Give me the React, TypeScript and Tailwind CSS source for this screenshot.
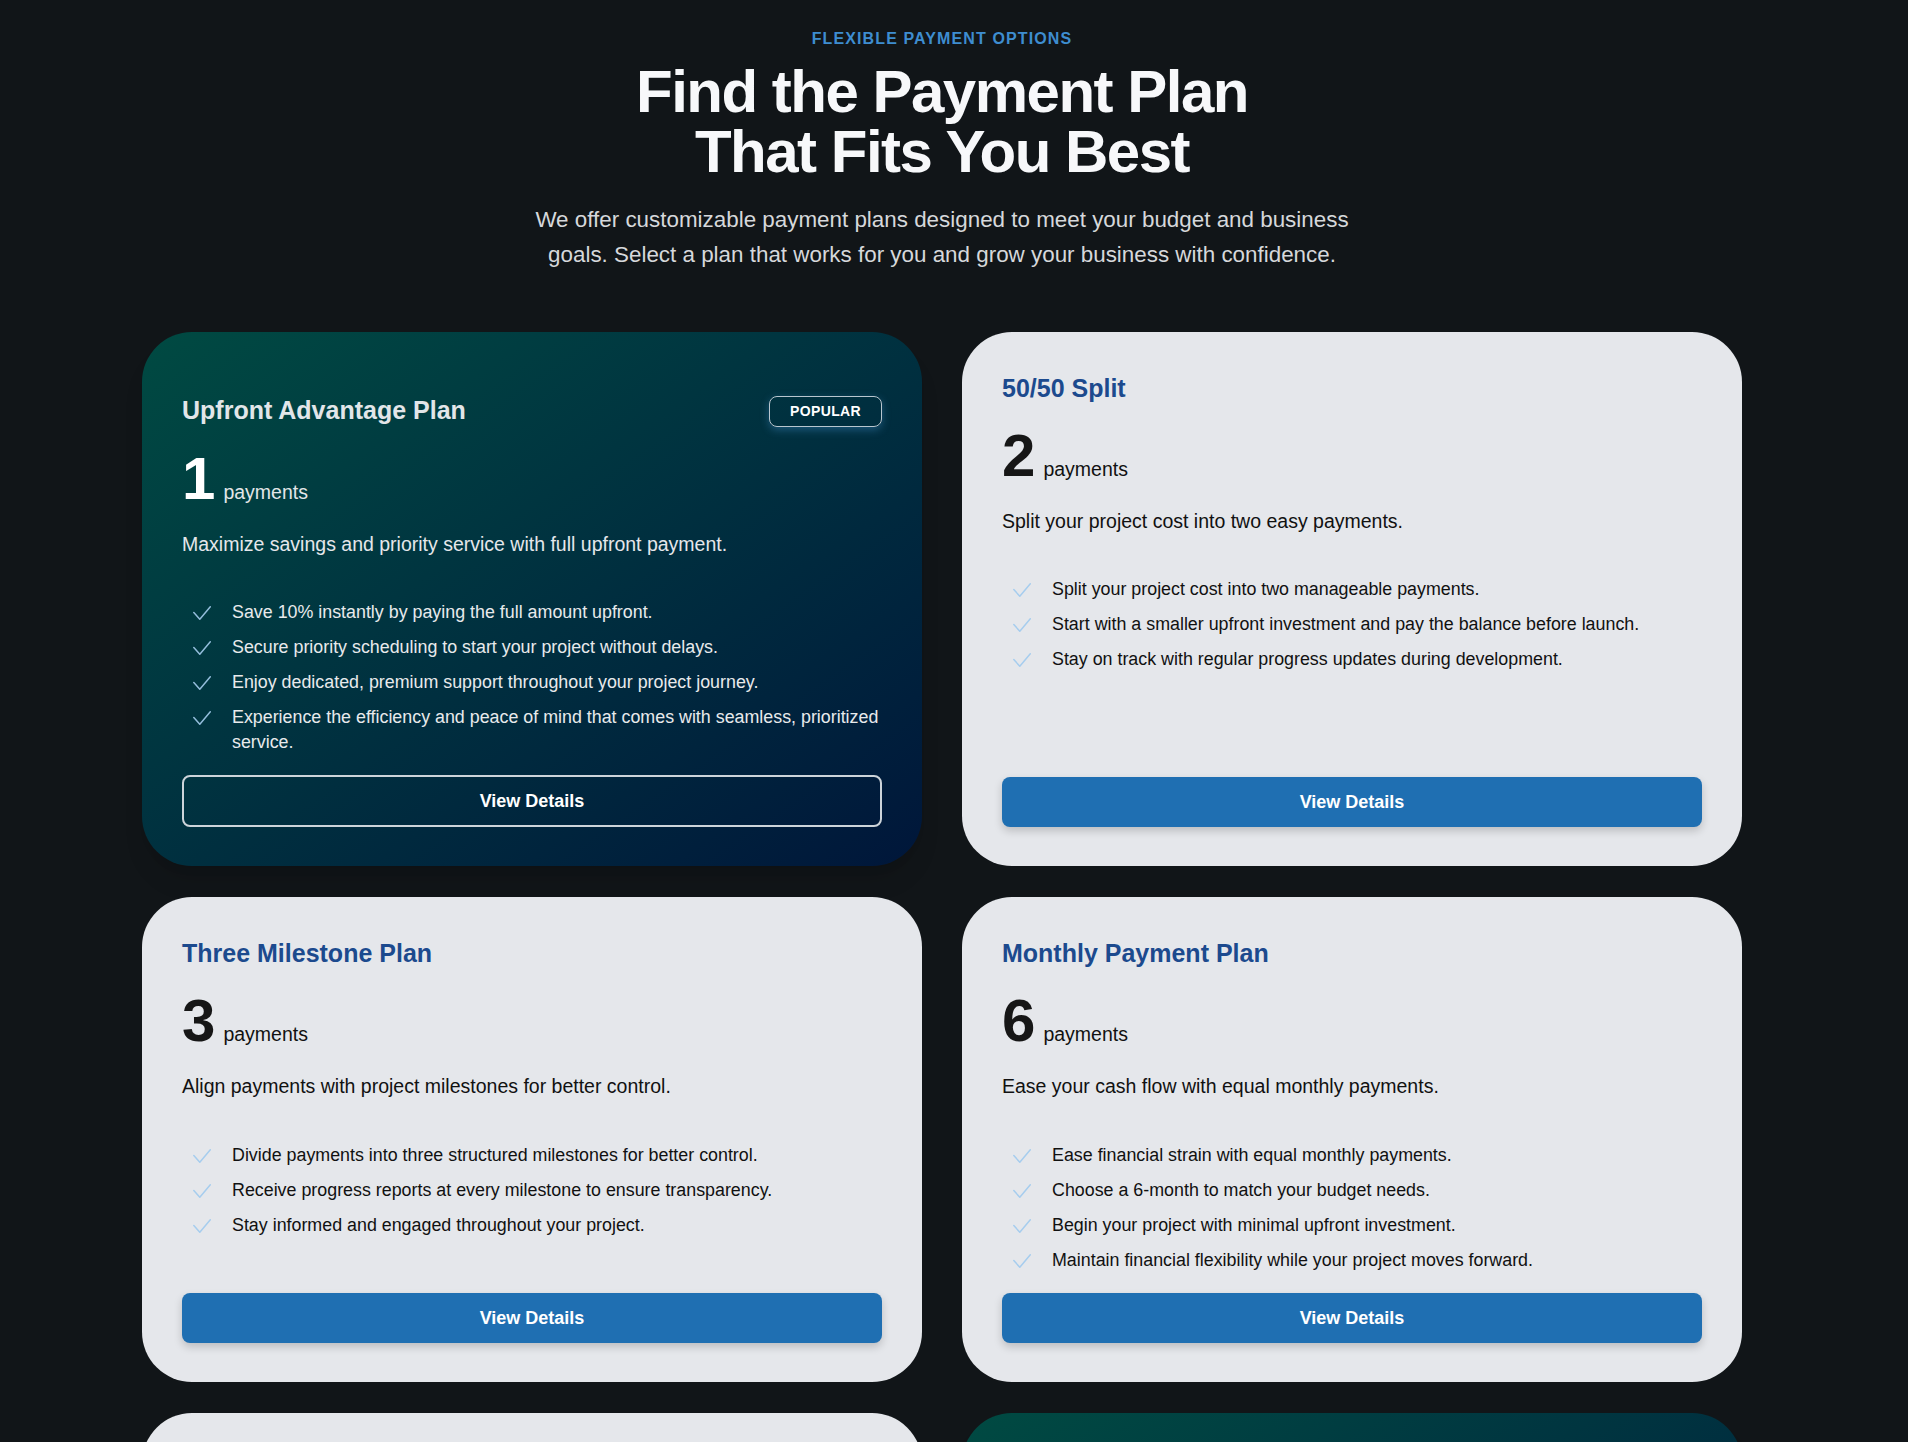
import * as React from "react";

type Plan = {
  title: string;
  count: number;
  blurb: string;
  features: string[];
  dark?: boolean;
  popular?: boolean;
};

const plans: Plan[] = [
  {
    title: "Upfront Advantage Plan",
    count: 1,
    blurb: "Maximize savings and priority service with full upfront payment.",
    features: [
      "Save 10% instantly by paying the full amount upfront.",
      "Secure priority scheduling to start your project without delays.",
      "Enjoy dedicated, premium support throughout your project journey.",
      "Experience the efficiency and peace of mind that comes with seamless, prioritized service.",
    ],
    dark: true,
    popular: true,
  },
  {
    title: "50/50 Split",
    count: 2,
    blurb: "Split your project cost into two easy payments.",
    features: [
      "Split your project cost into two manageable payments.",
      "Start with a smaller upfront investment and pay the balance before launch.",
      "Stay on track with regular progress updates during development.",
    ],
  },
  {
    title: "Three Milestone Plan",
    count: 3,
    blurb: "Align payments with project milestones for better control.",
    features: [
      "Divide payments into three structured milestones for better control.",
      "Receive progress reports at every milestone to ensure transparency.",
      "Stay informed and engaged throughout your project.",
    ],
  },
  {
    title: "Monthly Payment Plan",
    count: 6,
    blurb: "Ease your cash flow with equal monthly payments.",
    features: [
      "Ease financial strain with equal monthly payments.",
      "Choose a 6-month to match your budget needs.",
      "Begin your project with minimal upfront investment.",
      "Maintain financial flexibility while your project moves forward.",
    ],
  },
  {
    title: "Quarterly Payment Plan",
    count: 4,
    blurb: "Spread your investment across four quarterly payments.",
    features: [
      "Pay once every quarter for predictable budgeting.",
      "Keep more working capital on hand throughout the year.",
      "Receive quarterly reviews of your project progress.",
    ],
  },
  {
    title: "Custom Enterprise Plan",
    count: 12,
    blurb: "A tailored schedule built around your organization.",
    features: [
      "Work with our team to design a schedule that suits you.",
      "Align payments with your internal budget cycles.",
      "Get a dedicated account manager for the full engagement.",
    ],
    dark: true,
  },
];

const Tick = ({ dark }: { dark?: boolean }) => (
  <svg
    width="18"
    height="14"
    viewBox="0 0 18 14"
    fill="none"
    className={`shrink-0 mt-[6px] ml-[11px] mr-[21px] ${dark ? "text-[#93bddb]" : "text-[#a6cdee]"}`}
  >
    <path
      d="M0.8 6.6 L6.8 13.2 L17.3 0.8"
      stroke="currentColor"
      strokeWidth="1.5"
      strokeLinecap="round"
      strokeLinejoin="round"
    />
  </svg>
);

const PlanCard = ({ plan }: { plan: Plan }) => {
  const dark = plan.dark;
  return (
    <div
      className={`flex flex-col rounded-[50px] px-10 ${
        dark
          ? "pt-[60px] pb-[39px] bg-linear-to-br from-[#004a42] to-[#00163a] text-[#e5e7eb] shadow-xl"
          : "pt-10 pb-[39px] bg-[#e5e7eb] text-[#111111]"
      }`}
    >
      <div className="flex items-center justify-between">
        <h3
          className={`text-[25px] leading-8 font-bold ${
            dark ? "text-[#e2e6e9]" : "text-[#1c4a8e]"
          }`}
        >
          {plan.title}
        </h3>
        {plan.popular && (
          <span className="mt-1 rounded-lg border-[1.5px] border-[#b9c6cf] px-[20px] h-[31px] flex items-center text-[14px] font-bold tracking-wide text-white shadow-[0_3px_8px_rgba(80,160,230,0.35)]">
            POPULAR
          </span>
        )}
      </div>

      <div className="mt-[22px] flex items-baseline gap-2">
        <span
          className={`text-[60px] leading-none font-bold ${
            dark ? "text-white" : "text-[#161616]"
          }`}
        >
          {plan.count}
        </span>
        <span className={`text-[19.5px] leading-normal ${dark ? "text-[#e3e6e8]" : "text-[#111]"}`}>
          payments
        </span>
      </div>

      <p className={`mt-[21px] text-[19.5px] leading-normal ${dark ? "text-[#e5e7eb]" : "text-[#111]"}`}>
        {plan.blurb}
      </p>

      <ul className="mt-[41px] mb-5 flex flex-col gap-[10px]">
        {plan.features.map((f) => (
          <li key={f} className="flex items-start text-[17.85px] leading-[25px]">
            <Tick dark={dark} />
            <span className={dark ? "text-[#e8eaec]" : "text-[#111]"}>{f}</span>
          </li>
        ))}
      </ul>

      {dark ? (
        <button className="mt-auto h-[52px] w-full rounded-lg border-2 border-[#cdd4da] text-lg font-bold text-white">
          View Details
        </button>
      ) : (
        <button className="mt-auto h-[50px] w-full rounded-lg bg-[#1f6fb2] text-lg font-bold text-white shadow-[0_4px_8px_rgba(0,0,0,0.18)]">
          View Details
        </button>
      )}
    </div>
  );
};

const App: React.FC = () => {
  return (
    <div className="min-h-screen bg-[#111518] pr-6 font-['Liberation_Sans',Arial,sans-serif]">
      <div className="mx-auto max-w-[1600px] pt-[27px] pb-20">
        <div className="flex flex-col items-center text-center">
          <div className="text-[16px] leading-6 font-bold tracking-[0.07em] text-[#3e8dd0]">
            FLEXIBLE PAYMENT OPTIONS
          </div>
          <h1 className="mt-[11px] text-[60px] leading-[60px] font-bold tracking-tight text-[#f7f8fa]">
            <span className="block">Find the Payment Plan</span>
            <span className="block">That Fits You Best</span>
          </h1>
          <p className="mt-5 max-w-[840px] text-[22.4px] leading-[35px] text-[#d6d8db]">
            We offer customizable payment plans designed to meet your budget and business goals.
            Select a plan that works for you and grow your business with confidence.
          </p>
        </div>

        <div className="mt-[60px] grid grid-cols-2 gap-x-10 gap-y-[31px]">
          {plans.map((p) => (
            <PlanCard key={p.title} plan={p} />
          ))}
        </div>
      </div>
    </div>
  );
};

export default App;
